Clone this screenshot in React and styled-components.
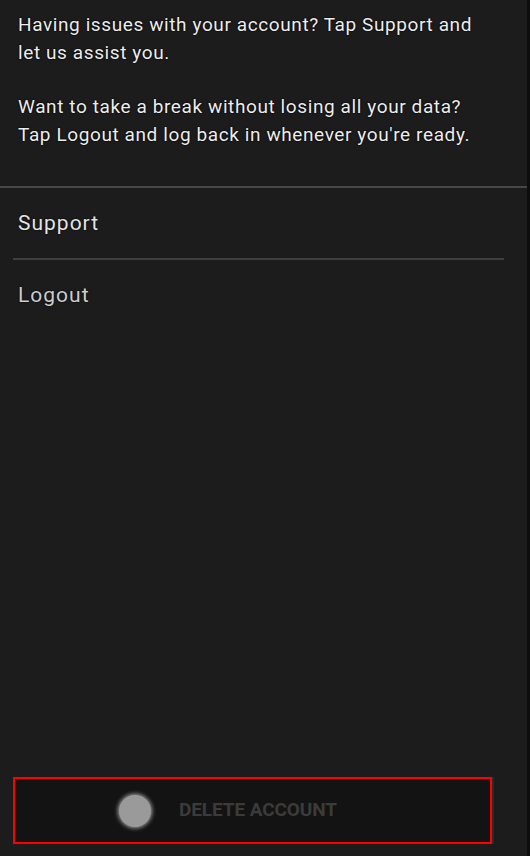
import React from "react";
import styled, { createGlobalStyle } from "styled-components";

const Global = createGlobalStyle`
  html, body { margin: 0; padding: 0; background: #1b1b1b; }
  * { box-sizing: border-box; }
`;

const Page = styled.div`
  width: 530px;
  height: 856px;
  background: #1c1c1c;
  border-right: 3px solid #0d0d0d;
  display: flex;
  flex-direction: column;
  font-family: Roboto, "Liberation Sans", sans-serif;
`;

const Intro = styled.div`
  padding: 11px 18px 37px;
`;

const Para = styled.p`
  margin: 0;
  color: #ededed;
  font-size: 19px;
  line-height: 28px;
  letter-spacing: 0.6px;
  text-shadow: 0 0 2px #000, 0 0 1px #000;
  & + & { margin-top: 26px; }
`;

const Divider = styled.div`
  height: 2px;
  background: ${(p) => (p.$inset ? "#3e3e3e" : "#474747")};
  margin: ${(p) => (p.$inset ? "0 23px 0 13px" : "0")};
`;

const Item = styled.div`
  height: 70px;
  display: flex;
  align-items: center;
  padding-left: 18px;
  color: ${(p) => p.$color};
  font-size: 21px;
  letter-spacing: 1px;
  text-shadow: 0 0 2px #000;
`;

const Footer = styled.div`
  margin-top: auto;
  padding: 0 35px 12px 13px;
`;

const Button = styled.div`
  height: 67px;
  border: 2px solid #ff0000;
  background: #131313;
  box-shadow: 2px 0 0 #2a2a2a;
  display: flex;
  align-items: center;
  padding-left: 104px;
  gap: 28px;
`;

const Dot = styled.span`
  width: 32px;
  height: 32px;
  border-radius: 50%;
  background: #9a9a9a;
  box-shadow: 0 0 4px 1px rgba(230, 230, 230, 0.7);
  flex: none;
`;

const Label = styled.span`
  color: #3b3b3b;
  font-weight: 700;
  font-size: 19px;
  letter-spacing: -0.1px;
  margin-top: -2px;
`;

export default function App() {
  return (
    <>
      <Global />
      <Page>
        <Intro>
          <Para>
            Having issues with your account? Tap Support and
            <br />
            let us assist you.
          </Para>
          <Para>
            Want to take a break without losing all your data?
            <br />
            Tap Logout and log back in whenever you're ready.
          </Para>
        </Intro>
        <Divider />
        <Item $color="#e4e4e4">Support</Item>
        <Divider $inset />
        <Item $color="#cdcdcd">Logout</Item>
        <Footer>
          <Button>
            <Dot />
            <Label>DELETE ACCOUNT</Label>
          </Button>
        </Footer>
      </Page>
    </>
  );
}
